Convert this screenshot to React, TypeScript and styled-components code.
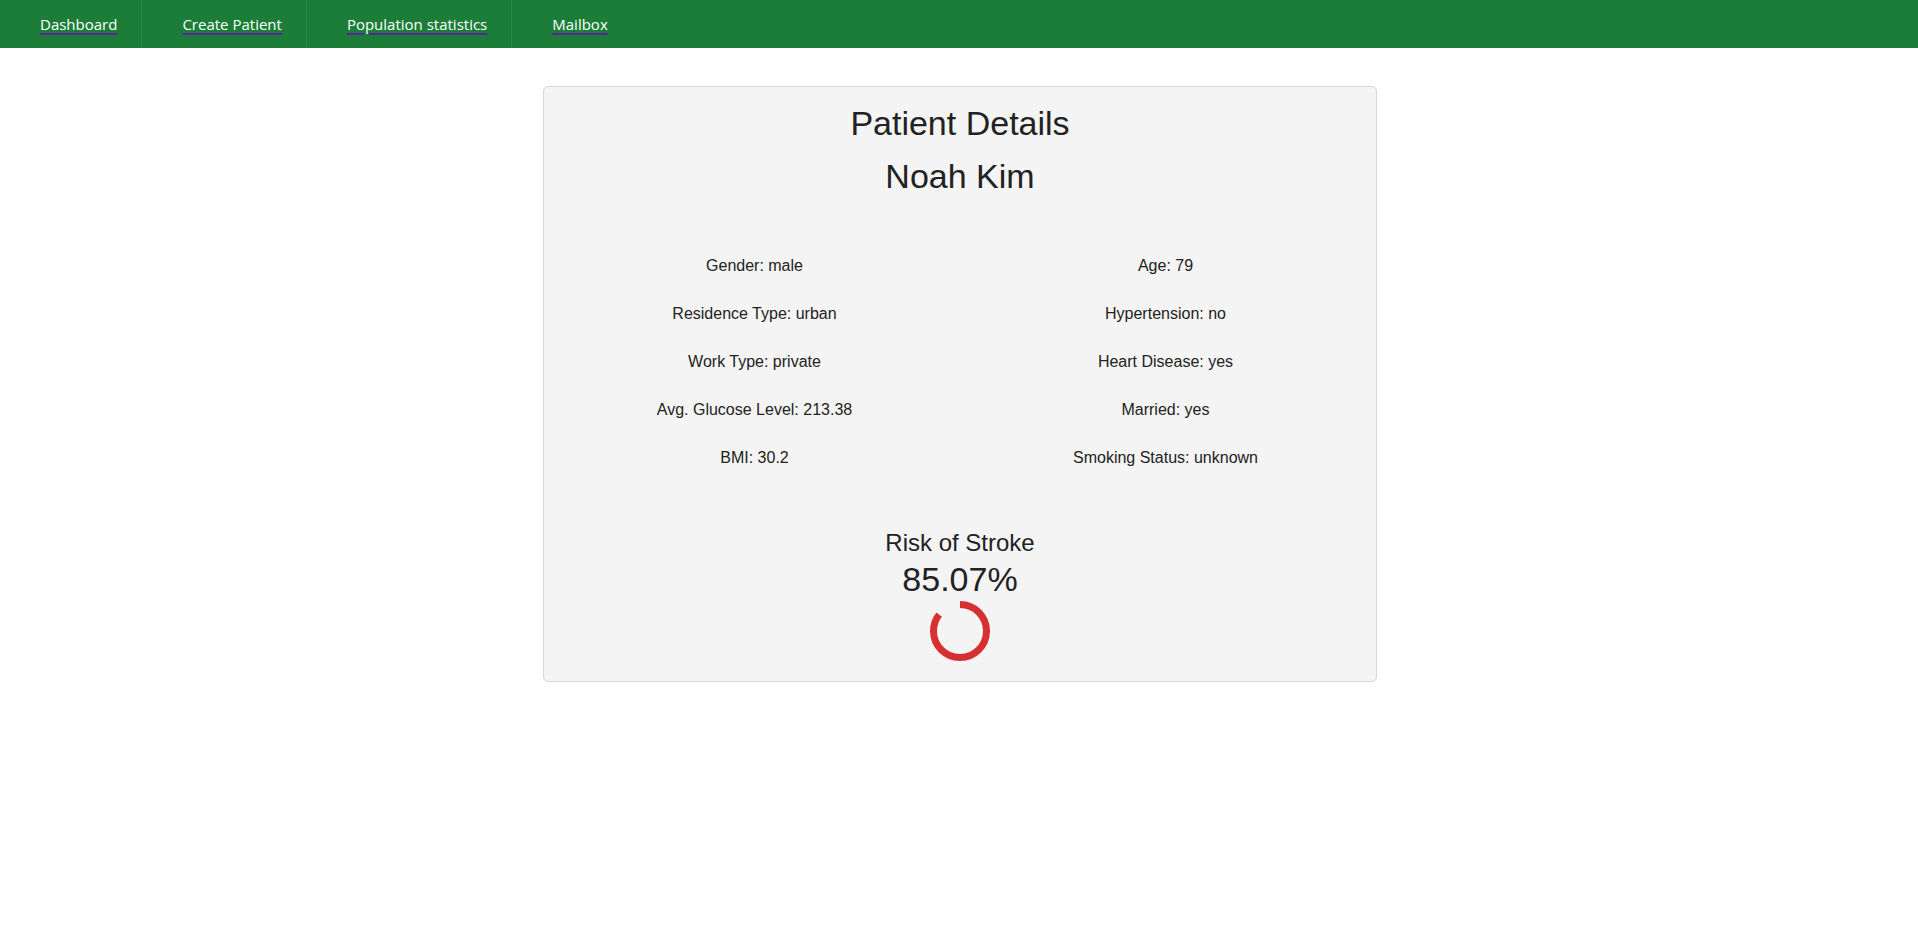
import React from "react";
import styled, { createGlobalStyle } from "styled-components";

const GlobalStyle = createGlobalStyle`
  html, body {
    margin: 0;
    padding: 0;
    background: #ffffff;
  }
  body {
    font-family: "Liberation Sans", Arial, sans-serif;
    color: #222222;
  }
`;

const NavBar = styled.nav`
  display: flex;
  align-items: stretch;
  height: 48px;
  background: #1b7d37;
`;

const NavItem = styled.a<{ $last?: boolean }>`
  display: flex;
  align-items: center;
  padding: 0 24px 0 40px;
  border-right: ${(p) => (p.$last ? "none" : "1px solid #2a8a45")};
  font-family: "Open Sans", "Noto Sans", sans-serif;
  font-size: 15px;
  color: #ffffff;
  text-decoration: underline;
  text-decoration-color: #5a22a0;
  text-decoration-thickness: 1.5px;
  text-underline-offset: 3px;
  cursor: pointer;
`;

const Main = styled.main`
  display: flex;
  justify-content: center;
  padding: 38px 0 0 2px;
`;

const Card = styled.section`
  box-sizing: border-box;
  width: 834px;
  height: 596px;
  padding: 16px 5px 0;
  background: #f4f4f4;
  border: 1px solid #d6d6d6;
  border-radius: 5px;
  display: flex;
  flex-direction: column;
  align-items: center;
`;

const Heading = styled.h1<{ $gap?: number }>`
  margin: ${(p) => p.$gap ?? 0}px 0 0;
  font-size: 34px;
  line-height: 40px;
  font-weight: 400;
  color: #222222;
  text-align: center;
`;

const DetailGrid = styled.div`
  width: 100%;
  margin-top: 46px;
  display: grid;
  grid-template-columns: 1fr 1fr;
`;

const Detail = styled.div`
  height: 48px;
  line-height: 48px;
  font-size: 16px;
  text-align: center;
  color: #222222;
`;

const RiskLabel = styled.div`
  margin-top: 47px;
  font-size: 24px;
  line-height: 28px;
  color: #222222;
`;

const RiskValue = styled.div`
  margin-top: 3px;
  font-size: 34px;
  line-height: 38px;
  color: #222222;
`;

const Gauge = styled.svg`
  display: block;
  margin-top: 3px;
`;

const details: [string, string][] = [
  ["Gender: male", "Age: 79"],
  ["Residence Type: urban", "Hypertension: no"],
  ["Work Type: private", "Heart Disease: yes"],
  ["Avg. Glucose Level: 213.38", "Married: yes"],
  ["BMI: 30.2", "Smoking Status: unknown"],
];

const navItems = ["Dashboard", "Create Patient", "Population statistics", "Mailbox"];

const RiskRing: React.FC<{ value: number }> = ({ value }) => {
  const r = 26.5;
  const c = 2 * Math.PI * r;
  return (
    <Gauge width="60" height="60" viewBox="0 0 60 60">
      <circle
        cx="30"
        cy="30"
        r={r}
        fill="none"
        stroke="#d63031"
        strokeWidth="7"
        strokeDasharray={`${(c * value) / 100} ${c}`}
        transform="rotate(-90 30 30)"
      />
    </Gauge>
  );
};

export default function App() {
  const risk = 85.07;
  return (
    <>
      <GlobalStyle />
      <NavBar>
        {navItems.map((item, i) => (
          <NavItem key={item} $last={i === navItems.length - 1}>
            {item}
          </NavItem>
        ))}
      </NavBar>
      <Main>
        <Card>
          <Heading>Patient Details</Heading>
          <Heading $gap={13}>Noah Kim</Heading>
          <DetailGrid>
            {details.map(([l, r]) => (
              <React.Fragment key={l}>
                <Detail>{l}</Detail>
                <Detail>{r}</Detail>
              </React.Fragment>
            ))}
          </DetailGrid>
          <RiskLabel>Risk of Stroke</RiskLabel>
          <RiskValue>{risk.toFixed(2)}%</RiskValue>
          <RiskRing value={risk} />
        </Card>
      </Main>
    </>
  );
}
